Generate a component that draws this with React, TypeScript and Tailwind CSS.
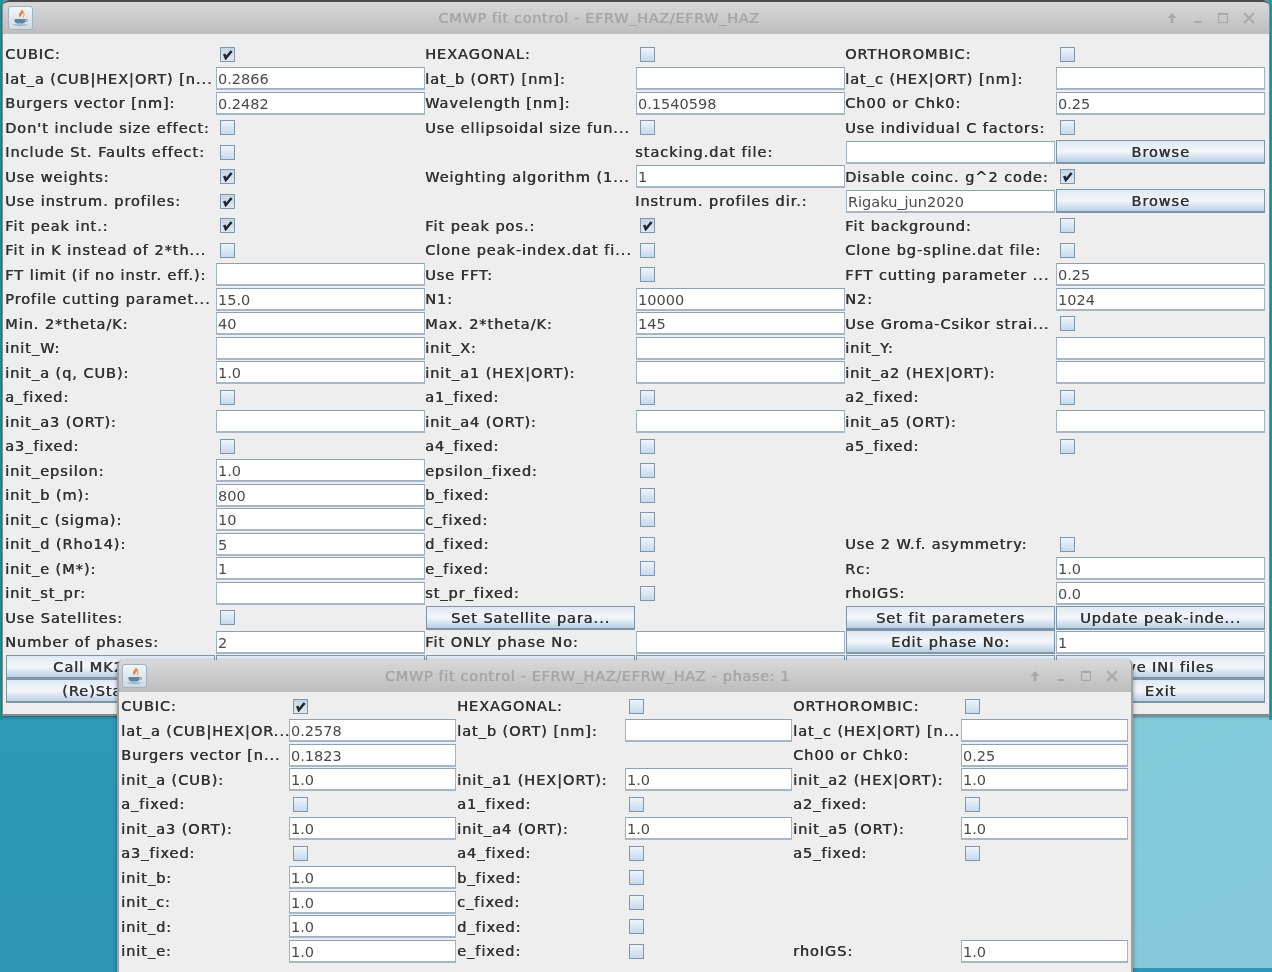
import React from 'react';

type Cell =
  | { t: 'l'; v: string }
  | { t: 'c'; on?: boolean }
  | { t: 'f'; v?: string }
  | { t: 'b'; v: string }
  | { t: 'e' };

const L = (v: string): Cell => ({ t: 'l', v });
const C = (on?: boolean): Cell => ({ t: 'c', on });
const F = (v?: string): Cell => ({ t: 'f', v });
const B = (v: string): Cell => ({ t: 'b', v });
const E: Cell = { t: 'e' };

const mainRows: Cell[][] = [
  [L('CUBIC:'), C(true), L('HEXAGONAL:'), C(), L('ORTHOROMBIC:'), C()],
  [L('lat_a (CUB|HEX|ORT) [n...'), F('0.2866'), L('lat_b (ORT) [nm]:'), F(), L('lat_c (HEX|ORT) [nm]:'), F()],
  [L('Burgers vector [nm]:'), F('0.2482'), L('Wavelength [nm]:'), F('0.1540598'), L('Ch00 or Chk0:'), F('0.25')],
  [L("Don't include size effect:"), C(), L('Use ellipsoidal size fun...'), C(), L('Use individual C factors:'), C()],
  [L('Include St. Faults effect:'), C(), E, L('stacking.dat file:'), F(), B('Browse')],
  [L('Use weights:'), C(true), L('Weighting algorithm (1...'), F('1'), L('Disable coinc. g^2 code:'), C(true)],
  [L('Use instrum. profiles:'), C(true), E, L('Instrum. profiles dir.:'), F('Rigaku_jun2020'), B('Browse')],
  [L('Fit peak int.:'), C(true), L('Fit peak pos.:'), C(true), L('Fit background:'), C()],
  [L('Fit in K instead of 2*th...'), C(), L('Clone peak-index.dat fi...'), C(), L('Clone bg-spline.dat file:'), C()],
  [L('FT limit (if no instr. eff.):'), F(), L('Use FFT:'), C(), L('FFT cutting parameter ...'), F('0.25')],
  [L('Profile cutting paramet...'), F('15.0'), L('N1:'), F('10000'), L('N2:'), F('1024')],
  [L('Min. 2*theta/K:'), F('40'), L('Max. 2*theta/K:'), F('145'), L('Use Groma-Csikor strai...'), C()],
  [L('init_W:'), F(), L('init_X:'), F(), L('init_Y:'), F()],
  [L('init_a (q, CUB):'), F('1.0'), L('init_a1 (HEX|ORT):'), F(), L('init_a2 (HEX|ORT):'), F()],
  [L('a_fixed:'), C(), L('a1_fixed:'), C(), L('a2_fixed:'), C()],
  [L('init_a3 (ORT):'), F(), L('init_a4 (ORT):'), F(), L('init_a5 (ORT):'), F()],
  [L('a3_fixed:'), C(), L('a4_fixed:'), C(), L('a5_fixed:'), C()],
  [L('init_epsilon:'), F('1.0'), L('epsilon_fixed:'), C(), E, E],
  [L('init_b (m):'), F('800'), L('b_fixed:'), C(), E, E],
  [L('init_c (sigma):'), F('10'), L('c_fixed:'), C(), E, E],
  [L('init_d (Rho14):'), F('5'), L('d_fixed:'), C(), L('Use 2 W.f. asymmetry:'), C()],
  [L('init_e (M*):'), F('1'), L('e_fixed:'), C(), L('Rc:'), F('1.0')],
  [L('init_st_pr:'), F(), L('st_pr_fixed:'), C(), L('rhoIGS:'), F('0.0')],
  [L('Use Satellites:'), C(), B('Set Satellite para...'), E, B('Set fit parameters'), B('Update peak-inde...')],
  [L('Number of phases:'), F('2'), L('Fit ONLY phase No:'), F(), B('Edit phase No:'), F('1')],
  [B('Call MK21.exe'), B(' '), B(' '), B(' '), B(' '), B('Save INI files')],
  [B('(Re)Start fit'), B(' '), B(' '), B(' '), B(' '), B('Exit')],
];

const phaseRows: Cell[][] = [
  [L('CUBIC:'), C(true), L('HEXAGONAL:'), C(), L('ORTHOROMBIC:'), C()],
  [L('lat_a (CUB|HEX|OR...'), F('0.2578'), L('lat_b (ORT) [nm]:'), F(), L('lat_c (HEX|ORT) [n...'), F()],
  [L('Burgers vector [n...'), F('0.1823'), E, E, L('Ch00 or Chk0:'), F('0.25')],
  [L('init_a (CUB):'), F('1.0'), L('init_a1 (HEX|ORT):'), F('1.0'), L('init_a2 (HEX|ORT):'), F('1.0')],
  [L('a_fixed:'), C(), L('a1_fixed:'), C(), L('a2_fixed:'), C()],
  [L('init_a3 (ORT):'), F('1.0'), L('init_a4 (ORT):'), F('1.0'), L('init_a5 (ORT):'), F('1.0')],
  [L('a3_fixed:'), C(), L('a4_fixed:'), C(), L('a5_fixed:'), C()],
  [L('init_b:'), F('1.0'), L('b_fixed:'), C(), E, E],
  [L('init_c:'), F('1.0'), L('c_fixed:'), C(), E, E],
  [L('init_d:'), F('1.0'), L('d_fixed:'), C(), E, E],
  [L('init_e:'), F('1.0'), L('e_fixed:'), C(), L('rhoIGS:'), F('1.0')],
];

const JavaIcon = () => (
  <div className="w-[25px] h-[24px] rounded-[3px] border border-[#9db2c6] bg-gradient-to-b from-[#f4f6f8] to-[#cfd8e0] flex items-center justify-center">
    <svg width="19" height="20" viewBox="0 0 19 20" fill="none">
      <path d="M10.5 1c1 2-2.5 3.5-2.5 6 0 1 .6 2 1.2 2.6C8.8 8 12.5 6.5 11.5 4.2 13 5 13.4 7.5 11 9.8c2-.6 3-2.6 2.4-4.6C13 3.5 11.5 2.5 10.5 1z" fill="#e8843a" />
      <path d="M3.5 11h11v1.4c0 1.8-1.6 3-3.2 3H6.7c-1.6 0-3.2-1.2-3.2-3V11z" fill="#5d83a3" />
      <path d="M14.5 11.6h1.2c1.2 0 1.2 2-.6 2.2" stroke="#5d83a3" strokeWidth="1" />
      <path d="M2 16.5h14.5c-1 1.6-13 1.6-14.5 0z" fill="#7f9db6" />
    </svg>
  </div>
);

const WinControls = () => (
  <div className="flex items-center gap-[11.7px] text-[#a9a9a9]">
    <svg width="14" height="14" viewBox="0 0 14 14" fill="currentColor">
      <path d="M7 2 L11.5 7 H8.5 V12 H5.5 V7 H2.5 Z" />
    </svg>
    <svg width="14" height="14" viewBox="0 0 14 14" fill="currentColor">
      <rect x="3.5" y="10" width="7" height="2" />
    </svg>
    <svg width="14" height="14" viewBox="0 0 14 14" fill="none" stroke="currentColor">
      <rect x="2.5" y="2.5" width="9" height="9" strokeWidth="1.2" />
      <rect x="2.5" y="2.5" width="9" height="1" strokeWidth="1" />
    </svg>
    <svg width="14" height="14" viewBox="0 0 14 14" fill="none" stroke="currentColor" strokeWidth="2">
      <path d="M2 2 L12 12 M12 2 L2 12" />
    </svg>
  </div>
);

const CellView = ({ cell, labelShift }: { cell: Cell; labelShift?: boolean }) => {
  if (cell.t === 'l') {
    return (
      <div
        className={`leading-[20px] whitespace-nowrap overflow-hidden text-[#333] text-[14.5px] tracking-[0.95px] [text-shadow:0.5px_0_0_#333] ${
          labelShift ? 'ml-[-1px]' : ''
        }`}
      >
        {cell.v}
      </div>
    );
  }
  if (cell.t === 'c') {
    return (
      <div className="pl-1">
        <div
          className={`w-[15px] h-[15px] border border-[#7f96ad] flex items-center justify-center ${
            cell.on ? 'bg-gradient-to-b from-[#c6d5e4] to-[#dfe8f1]' : 'bg-gradient-to-b from-[#eff4f9] to-[#c6d9ec]'
          }`}
        >
          {cell.on && (
            <svg width="11" height="11" viewBox="0 0 11 11" fill="none" stroke="#23272d" strokeWidth="2.6">
              <path d="M2.2 5 L3.8 9 L9.6 2" />
            </svg>
          )}
        </div>
      </div>
    );
  }
  if (cell.t === 'f') {
    return (
      <div className="h-[23px] mr-[1px] bg-white border border-[#a3b2c2] border-t-[#8ea0b3] border-b-2 border-b-[#a7b6c6] pl-[1px] text-[14.5px] leading-[22px] text-[#4a4a4a] whitespace-nowrap overflow-hidden">
        {cell.v}
      </div>
    );
  }
  if (cell.t === 'b') {
    return (
      <div className="h-[24px] mr-[1px] border border-[#8094a8] border-b-2 bg-gradient-to-b from-[#dfe9f3] via-[#f3f7fb] to-[#b9d0e6] text-center text-[14.5px] tracking-[0.95px] [text-shadow:0.5px_0_0_#333] leading-[23px] text-[#333] whitespace-nowrap overflow-hidden">
        {cell.v}
      </div>
    );
  }
  return <div />;
};

const FormGrid = ({ rows, cols, labelShift }: { rows: Cell[][]; cols: string; labelShift?: boolean }) => (
  <div className={`grid items-center auto-rows-[24.5px] ${cols}`}>
    {rows.flat().map((cell, i) => (
      <CellView key={i} cell={cell} labelShift={labelShift} />
    ))}
  </div>
);

export default function App() {
  return (
    <div className="relative w-[1272px] h-[972px] overflow-hidden bg-gradient-to-b from-[#2aa3ba] to-[#2e96b6] font-['DejaVu_Sans',sans-serif] blur-[0.35px]">
      {/* wallpaper, lighter part on the right */}
      <div className="absolute left-[600px] top-[640px] w-[672px] h-[328px] bg-gradient-to-br from-[#78d0da] to-[#87c8dc]" />
      <div className="absolute left-0 top-0 w-[3px] h-[720px] bg-[#169a9c]" />
      <div className="absolute right-0 top-0 w-[3px] h-[720px] bg-[#1da4a4]" />

      {/* main window */}
      <div className="absolute left-[2px] top-0 w-[1268px] h-[716px] rounded-t-[6px] bg-[#eeeeee] border-x border-b-2 border-[#8a8a8a] shadow-[0_1px_3px_rgba(0,0,0,0.4)]">
        <div className="h-[34px] flex items-center gap-1 pl-[5px] pr-[13px] border-t-2 border-[#4a4a4a] rounded-t-[6px] bg-gradient-to-b from-[#d8d8d8] to-[#bdbdbd]">
          <JavaIcon />
          <div className="flex-1 pt-[2px] text-center text-[14.5px] tracking-[0.65px] text-[#a6a6a6] [text-shadow:0.5px_0_0_#a6a6a6] whitespace-nowrap">
            CMWP fit control - EFRW_HAZ/EFRW_HAZ
          </div>
          <WinControls />
        </div>
        <div className="pl-[3px] pt-[8px]">
          <FormGrid rows={mainRows} cols="grid-cols-[repeat(6,210px)]" labelShift />
        </div>
      </div>

      {/* phase window */}
      <div className="absolute left-[117px] top-[660px] w-[1016px] h-[320px] rounded-t-[6px] bg-[#eeeeee] border-x-2 border-[#a0a0a0] shadow-[0_1px_4px_rgba(0,0,0,0.4)]">
        <div className="h-[32px] flex items-center gap-1 pl-[3px] pr-[12px] rounded-t-[6px] bg-gradient-to-b from-[#d8d8d8] to-[#bdbdbd]">
          <JavaIcon />
          <div className="flex-1 pt-[2px] text-center text-[14.5px] tracking-[0.65px] text-[#a6a6a6] [text-shadow:0.5px_0_0_#a6a6a6] whitespace-nowrap">
            CMWP fit control - EFRW_HAZ/EFRW_HAZ - phase: 1
          </div>
          <WinControls />
        </div>
        <div className="pl-[2px] pt-[2px]">
          <FormGrid rows={phaseRows} cols="grid-cols-[repeat(6,168px)]" />
        </div>
      </div>
    </div>
  );
}
